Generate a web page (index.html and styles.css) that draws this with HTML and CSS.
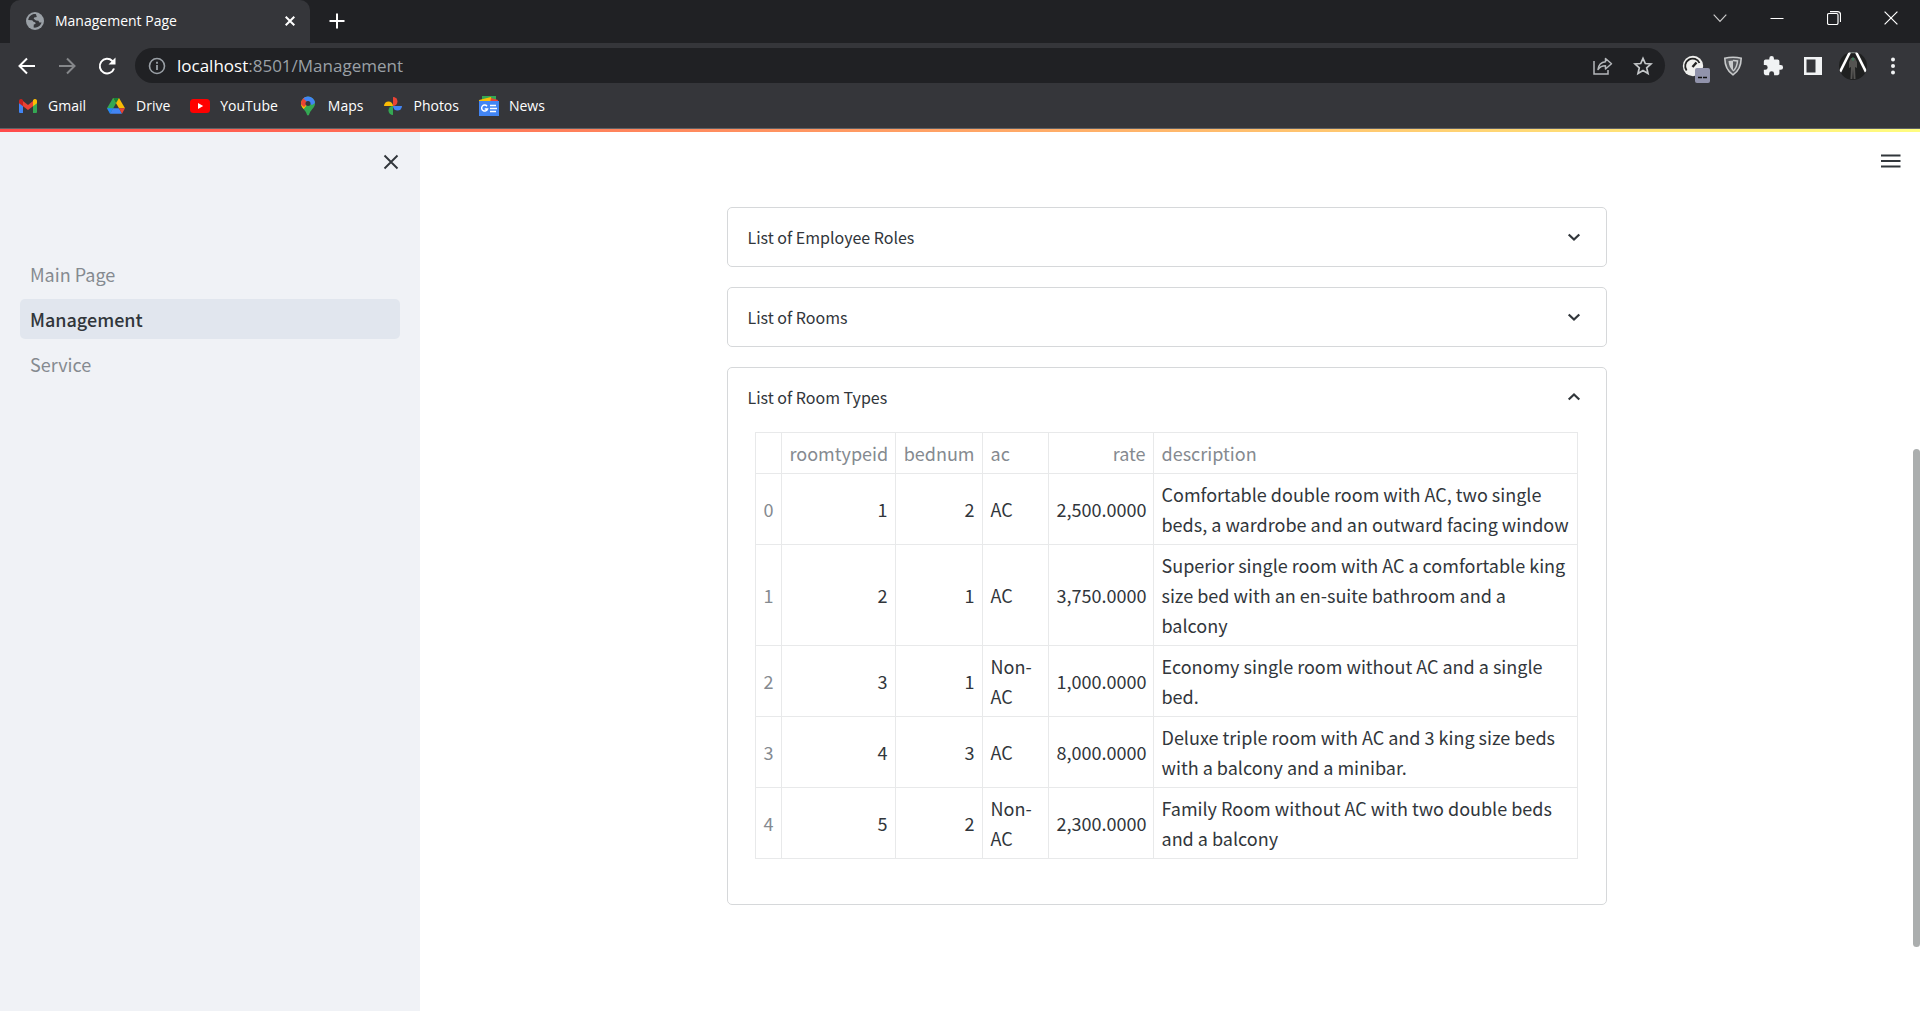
FILE: index.html
```html
<!DOCTYPE html>
<html lang="en">
<head>
<meta charset="utf-8">
<title>Management Page</title>
<link rel="stylesheet" href="styles.css">
</head>
<body>
<header class="browser">
  <div class="tabstrip">
    <div class="tab">
      <svg class="tab-icon" width="18" height="18" viewBox="0 0 18 18"><circle cx="9" cy="9" r="9" fill="#9aa0a6"/><path d="M10 2.200C6 1.600 2.800 4.200 2.200 8l3.600.3c1.200.2 1.200 1.600 2.400 1.800 1.300.2 1.600.9 1.200 1.900l-1.600.6-.2 3c3.600.6 7-1.600 8-5l-2.200-.2-1-1.700-2.400-.3-2.300-1.700.5-1.300 2.600-.5z" fill="#35363a"/></svg>
      <span class="tab-title">Management Page</span>
      <button class="tab-close" aria-label="Close tab"><svg width="10" height="10" viewBox="0 0 10 10"><path d="M.7.7l8.600 8.600M9.300.7L.7 9.300" stroke="#fff" stroke-width="2"/></svg></button>
    </div>
    <button class="new-tab" aria-label="New tab"><svg width="16" height="16" viewBox="0 0 16 16"><path d="M8 .5v15M.5 8h15" stroke="#fff" stroke-width="2"/></svg></button>
    <div class="window-controls">
      <button aria-label="Search tabs"><svg width="14" height="14" viewBox="0 0 14 14"><path d="M.7 3.700L7 10.300l6.300-6.600" fill="none" stroke="#ccc" stroke-width="1.200"/></svg></button>
      <button aria-label="Minimize"><svg width="14" height="14" viewBox="0 0 14 14"><path d="M.5 7.500h13" stroke="#fff"/></svg></button>
      <button aria-label="Restore"><svg width="14" height="14" viewBox="0 0 14 14"><rect x=".5" y="2.500" width="10.500" height="11" rx="1.500" fill="none" stroke="#fff" stroke-width="1.200"/><path d="M3 .6h7.500a3 3 0 0 1 3 3V11" fill="none" stroke="#fff" stroke-width="1.200"/></svg></button>
      <button aria-label="Close window"><svg width="14" height="14" viewBox="0 0 14 14"><path d="M.6.6l12.800 12.800M13.400.6L.6 13.400" stroke="#fff" stroke-width="1.200"/></svg></button>
    </div>
  </div>

  <div class="toolbar">
    <button class="tool" aria-label="Back"><svg width="18" height="18" viewBox="0 0 18 18"><path d="M17 9H2M9 1.500L1.500 9 9 16.500" fill="none" stroke="#fff" stroke-width="2"/></svg></button>
    <button class="tool" aria-label="Forward"><svg width="18" height="18" viewBox="0 0 18 18"><path d="M1 9h15M9 1.500L16.500 9 9 16.500" fill="none" stroke="#85878a" stroke-width="2"/></svg></button>
    <button class="tool" aria-label="Reload"><svg width="20" height="20" viewBox="0 0 20 20"><path d="M17 12.500A7.300 7.300 0 1 1 15.300 5L17 7" fill="none" stroke="#fff" stroke-width="2"/><path d="M18.500 1.500v7h-7z" fill="#fff"/></svg></button>
    <div class="omnibox">
      <svg width="18" height="18" viewBox="0 0 18 18"><circle cx="9" cy="9" r="7.500" fill="none" stroke="#9aa0a6" stroke-width="1.600"/><path d="M9 8v5M9 4.800v1.900" stroke="#9aa0a6" stroke-width="1.800"/></svg>
      <div class="url" role="textbox" tabindex="0" aria-label="Address"><span class="host">localhost</span>:8501/Management</div>
      <button class="omni-button" aria-label="Share"><svg width="20" height="20" viewBox="0 0 20 20"><path d="M1 5v13h14v-4" fill="none" stroke="#b4b7ba" stroke-width="1.500"/><path d="M12.500 2.500l6 5.300-6 5.200v-3.200C9 9.800 6.800 10.900 5 13.500c.5-4.500 3-7.300 7.500-7.800z" fill="none" stroke="#b4b7ba" stroke-width="1.500" stroke-linejoin="round"/></svg></button>
      <button class="omni-button" aria-label="Bookmark"><svg width="20" height="20" viewBox="0 0 20 20"><path d="M10 2.300l2.300 5.200 5.700.5-4.300 3.800 1.300 5.600-5-3-5 3 1.300-5.600L2 8l5.700-.5z" fill="none" stroke="#c4c7c9" stroke-width="1.700"/></svg></button>
    </div>
    <button class="tool" aria-label="Speed test extension"><svg class="speed" width="30" height="30" viewBox="0 0 30 30"><circle cx="12" cy="12" r="10.200" fill="#f0f0ee"/><path d="M5.600 16.500A7.500 7.500 0 1 1 18.500 9" fill="none" stroke="#222" stroke-width="1.800"/><path d="M11.500 13l4-4.500" stroke="#222" stroke-width="2.400"/><rect x="14" y="14" width="15" height="15" rx="2" fill="#9193ab"/><path d="M17 23.500h4M22 23.500h4" stroke="#111" stroke-width="1.500"/></svg></button>
    <button class="tool" aria-label="Shield extension"><svg width="20" height="20" viewBox="0 0 20 20"><path d="M10 1.200c3 0 6 .4 8.200 1-.1 8-3 13.200-8.200 16.600C4.800 15.400 1.900 10.200 1.800 2.200 4 1.600 7 1.200 10 1.200z" fill="#55575b" stroke="#c8cacb" stroke-width="1.600"/><path d="M5.500 5l4.500-.5V15C7.300 12.800 5.800 9.300 5.500 5z" fill="#c8cacb"/><path d="M10 4.500l4.500.5c-.3 4.300-1.800 7.800-4.500 10" fill="none" stroke="#c8cacb" stroke-width="1.500"/></svg></button>
    <button class="tool" aria-label="Extensions"><svg width="22" height="22" viewBox="0 0 24 24"><path d="M20.500 11H19V7a2 2 0 0 0-2-2h-4V3.500a2.500 2.500 0 0 0-5 0V5H4a2 2 0 0 0-2 2v3.800h1.500a2.700 2.700 0 0 1 0 5.400H2V20a2 2 0 0 0 2 2h3.800v-1.500a2.700 2.700 0 0 1 5.400 0V22H17a2 2 0 0 0 2-2v-4h1.500a2.500 2.500 0 0 0 0-5z" fill="#f1f3f4"/></svg></button>
    <button class="tool" aria-label="Side panel"><svg width="18" height="18" viewBox="0 0 18 18"><path d="M0 0h18v18H0zM2.500 2.500v13h9v-13z" fill="#f1f3f4" fill-rule="evenodd"/></svg></button>
    <button class="tool" aria-label="Profile"><svg width="28" height="28" viewBox="0 0 28 28"><clipPath id="avatar-clip"><circle cx="14" cy="14" r="14"/></clipPath><g clip-path="url(#avatar-clip)"><path d="M0 0h28v28H0z" fill="#1f2020"/><path d="M11 0L1 20M17 0l10 20" stroke="#fff" stroke-width="2.600"/><path d="M11 .5h6" stroke="#79807e" stroke-width="1.500"/><path d="M12 6h4l2 4v6l-2-1 .5 12h-1.800L14 17l-.7 10h-1.800L12 15l-2 1v-6z" fill="#555452"/><path d="M13 5.500h2v3h-2z" fill="#3d7858"/></g></svg></button>
    <button class="tool" aria-label="Browser menu"><svg width="6" height="18" viewBox="0 0 6 18"><g fill="#f1f3f4"><circle cx="3" cy="2.500" r="2"/><circle cx="3" cy="9" r="2"/><circle cx="3" cy="15.500" r="2"/></g></svg></button>
  </div>

  <nav class="bookmarks" aria-label="Bookmarks">
    <a href="#gmail"><svg width="20" height="20" viewBox="0 0 20 20"><path d="M1 5v11a1 1 0 0 0 1 1h3V8z" fill="#4285f4"/><path d="M19 5v11a1 1 0 0 1-1 1h-3V8z" fill="#34a853"/><path d="M5 5l5 4 5-4v5.300L10 14l-5-3.700z" fill="#ea4335"/><path d="M1 5c0-2 1.800-2.600 3.200-1.600L5 4v6.300L1 7.200z" fill="#c5221f"/><path d="M19 5c0-2-1.800-2.600-3.200-1.600L15 4v6.300l4-3.100z" fill="#fbbc04"/></svg>Gmail</a>
    <a href="#drive"><svg width="20" height="20" viewBox="0 0 20 20"><path d="M7 2h6l-3 5.200L4.300 17.500 1 12.300z" fill="#34a853"/><path d="M7 2h6l6 10.300h-6z" fill="#fbbc04"/><path d="M7 2h6l-3 5.200z" fill="#188038"/><path d="M1 12.300h6l-3 5.500z" fill="#2684fc"/><path d="M7 12.300h6l3 5.500H4z" fill="#4285f4"/><path d="M13 12.300h6l-3 5.500z" fill="#ea4335"/></svg>Drive</a>
    <a href="#youtube"><svg width="20" height="20" viewBox="0 0 20 20"><rect y="3" width="20" height="14" rx="3.500" fill="#f00"/><path d="M8 7l5.200 3L8 13z" fill="#fff"/></svg>YouTube</a>
    <a href="#maps"><svg width="20" height="20" viewBox="0 0 20 20"><clipPath id="pin-clip"><path d="M10 .5a7 7 0 0 1 7 7c0 4-3.500 5.500-5.300 9.500-.6 1.500-.7 2.500-1.700 2.500S8.900 18.500 8.300 17C6.500 13 3 11.500 3 7.500a7 7 0 0 1 7-7z"/></clipPath><g clip-path="url(#pin-clip)"><path d="M0 0h20v20H0z" fill="#34a853"/><path d="M0 4l10 4-7 8H0z" fill="#fbbc04"/><path d="M0 0h7l3 7-4 4-6-5z" fill="#ea4335"/><path d="M5 2l3-2h12v5l-6 4-4-2z" fill="#4285f4"/></g><circle cx="10" cy="7.500" r="2.500" fill="#35363a"/></svg>Maps</a>
    <a href="#photos"><svg width="20" height="20" viewBox="0 0 20 20"><path d="M10 1a4.500 4.500 0 0 1 0 9z" fill="#ea4335"/><path d="M19 10a4.500 4.500 0 0 1-9 0z" fill="#4285f4"/><path d="M10 19a4.500 4.500 0 0 1 0-9z" fill="#34a853"/><path d="M1 10a4.500 4.500 0 0 1 9 0z" fill="#fbbc04"/></svg>Photos</a>
    <a href="#news"><svg width="20" height="20" viewBox="0 0 20 20"><path d="M3 0h14v6H3z" fill="#34a853"/><path d="M0 4l12-3 1 6H0z" fill="#fbbc04"/><path d="M12 2l7 2-1 3h-7z" fill="#ea4335"/><path d="M0 5h20v15H0z" fill="#4285f4"/><path d="M8 10.200A3 3 0 1 0 8.500 13H5.700M11 9.500h6M11 12.500h7M11 15.500h6" fill="none" stroke="#fff" stroke-width="1.500"/></svg>News</a>
  </nav>
</header>

<div class="decoration"></div>

<div class="app">
  <aside class="sidebar">
    <div class="sidebar-top">
      <button class="icon-button" aria-label="Close sidebar"><svg width="16" height="16" viewBox="0 0 16 16"><path d="M1.500 1.500l13 13M14.500 1.500l-13 13" stroke="#31363b" stroke-width="1.900"/></svg></button>
    </div>
    <nav class="pages" aria-label="Pages">
      <a href="#main">Main Page</a>
      <a href="#management" class="active" aria-current="page">Management</a>
      <a href="#service">Service</a>
    </nav>
  </aside>

  <main class="main">
    <div class="main-top">
      <button class="icon-button" aria-label="Menu"><svg width="20" height="14" viewBox="0 0 20 14"><path d="M0 1.500h19.500M0 7h19.500M0 12.500h19.500" stroke="#31363b" stroke-width="1.900"/></svg></button>
    </div>
    <div class="content">
      <details class="expander">
        <summary>List of Employee Roles<svg class="chevron" width="20" height="20" viewBox="0 0 20 20"><path d="M4.700 7.500L10 12.500l5.300-5" fill="none" stroke="#31363b" stroke-width="2.200"/></svg></summary>
      </details>
      <details class="expander">
        <summary>List of Rooms<svg class="chevron" width="20" height="20" viewBox="0 0 20 20"><path d="M4.700 7.500L10 12.500l5.300-5" fill="none" stroke="#31363b" stroke-width="2.200"/></svg></summary>
      </details>
      <details class="expander" open>
        <summary>List of Room Types<svg class="chevron" width="20" height="20" viewBox="0 0 20 20"><path d="M4.700 7.500L10 12.500l5.300-5" fill="none" stroke="#31363b" stroke-width="2.200"/></svg></summary>
        <div class="expander-body">
          <table>
            <colgroup><col class="col-index"><col class="col-id"><col class="col-beds"><col class="col-ac"><col class="col-rate"><col></colgroup>
            <thead>
              <tr><td></td><th scope="col" class="num">roomtypeid</th><th scope="col" class="num">bednum</th><th scope="col">ac</th><th scope="col" class="num">rate</th><th scope="col">description</th></tr>
            </thead>
            <tbody>
              <tr><th scope="row">0</th><td class="num">1</td><td class="num">2</td><td>AC</td><td class="num">2,500.0000</td><td>Comfortable double room with AC, two single beds, a wardrobe and an outward facing window</td></tr>
              <tr><th scope="row">1</th><td class="num">2</td><td class="num">1</td><td>AC</td><td class="num">3,750.0000</td><td>Superior single room with AC a comfortable king size bed with an en-suite bathroom and a balcony</td></tr>
              <tr><th scope="row">2</th><td class="num">3</td><td class="num">1</td><td>Non-AC</td><td class="num">1,000.0000</td><td>Economy single room without AC and a single bed.</td></tr>
              <tr><th scope="row">3</th><td class="num">4</td><td class="num">3</td><td>AC</td><td class="num">8,000.0000</td><td>Deluxe triple room with AC and 3 king size beds with a balcony and a minibar.</td></tr>
              <tr><th scope="row">4</th><td class="num">5</td><td class="num">2</td><td>Non-AC</td><td class="num">2,300.0000</td><td>Family Room without AC with two double beds and a balcony</td></tr>
            </tbody>
          </table>
        </div>
      </details>
    </div>
  </main>
  <div class="scrollbar" aria-hidden="true"><div class="thumb"></div></div>
</div>
</body>
</html>
```
FILE: styles.css
```css
* { box-sizing: border-box; }

body {
  margin: 0;
  min-height: 100vh;
  display: flex;
  flex-direction: column;
  background: #fff;
  color: #31363b;
  font-family: "Noto Sans CJK SC", "Noto Sans", sans-serif;
  font-size: 18px;
  line-height: 30px;
}

button {
  border: 0;
  padding: 0;
  background: none;
  display: flex;
  align-items: center;
  justify-content: center;
  flex: none;
}

svg { flex: none; display: block; }
a { text-decoration: none; color: inherit; }

/* Browser frame */
.browser {
  background: #35363a;
  border-bottom: 1px solid #5f6266;
  color: #fff;
  font-family: "Open Sans", sans-serif;
  font-size: 14px;
  line-height: 20px;
}

.tabstrip {
  display: flex;
  height: 43px;
  padding-left: 10px;
  background: #202124;
}

.tab {
  display: flex;
  align-items: center;
  width: 300px;
  padding: 0 10px 2px 16px;
  background: #35363a;
  border-radius: 10px 10px 0 0;
}

.tab-title { flex: 1; margin-left: 11px; }
.tab-close { width: 20px; height: 20px; }
.new-tab { width: 54px; height: 42px; }
.window-controls { display: flex; margin-left: auto; padding-right: 1px; height: 36px; }
.window-controls button { width: 57px; }

.toolbar {
  display: flex;
  align-items: center;
  padding: 5px 7px 0;
}

.tool { width: 40px; height: 35px; }
.speed { margin-left: 6px; margin-top: 7px; }

.omnibox {
  flex: 1;
  display: flex;
  align-items: center;
  height: 35px;
  margin: 0 8px;
  padding: 0 2px 0 13px;
  border-radius: 18px;
  background: #202124;
}

.url { flex: 1; margin-left: 11px; font-size: 17px; color: #9aa0a6; }
.host { color: #fff; }
.omni-button { width: 40px; height: 35px; }

.bookmarks {
  display: flex;
  gap: 20px;
  height: 45px;
  padding: 0 18px;
}

.bookmarks a { display: flex; align-items: center; gap: 10px; }

.decoration {
  height: 3px;
  background: linear-gradient(90deg, #ff4b4b, #fffd80);
}

/* Application */
.app { flex: 1; display: flex; }

.sidebar { width: 420px; flex: none; background: #f0f2f6; }

.sidebar-top {
  display: flex;
  justify-content: flex-end;
  height: 122px;
  padding: 10px 9px 0;
}

.icon-button { width: 40px; height: 40px; }

.pages {
  display: flex;
  flex-direction: column;
  gap: 5px;
  padding: 0 20px;
  color: #858a90;
}

.pages a { padding: 5px 10px; border-radius: 5px; }
.pages .active { background: #e1e6ee; color: #31363b; font-weight: 500; }

.main { flex: 1; min-width: 0; }

.main-top {
  display: flex;
  justify-content: flex-end;
  height: 75px;
  padding: 9px 2px 0;
}

.content {
  display: flex;
  flex-direction: column;
  gap: 20px;
  max-width: 880px;
  margin: 0 auto;
  padding-bottom: 60px;
}

.expander { border: 1px solid #d6d8da; border-radius: 5px; }

summary {
  display: flex;
  align-items: center;
  justify-content: space-between;
  padding: 14px 22px 14px 20px;
  font-size: 16px;
  list-style: none;
}

[open] .chevron { transform: rotate(180deg); }

.expander-body { padding: 6px 28px 45px 27px; }

table { width: 100%; table-layout: fixed; border-collapse: collapse; }
th, td { border: 1px solid #e8e9ea; padding: 5px 7px 5px 8px; text-align: left; }
th { font-weight: 400; color: #858a90; }
.num { text-align: right; }

.col-index { width: 26px; }
.col-id { width: 114px; }
.col-beds { width: 87px; }
.col-ac { width: 66px; }
.col-rate { width: 105px; }

.scrollbar { width: 7px; flex: none; display: flex; flex-direction: column; }
.scrollbar::before { content: ""; flex: 317; }
.thumb { flex: 498; border-radius: 4px; background: #abaeae; }
.scrollbar::after { content: ""; flex: 64; }
```
